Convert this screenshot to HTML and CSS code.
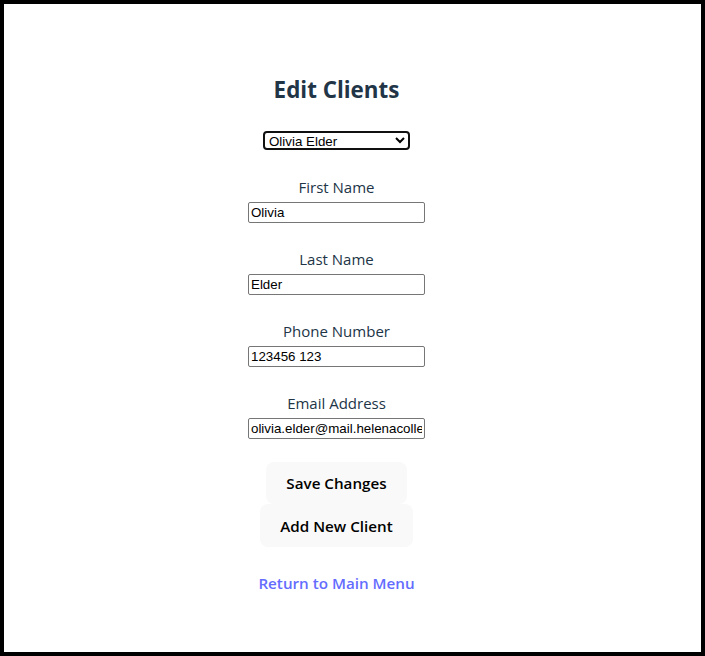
FILE: index.html
```html
<!DOCTYPE html>
<html lang="en">
<head>
<meta charset="utf-8">
<title>Edit Clients</title>
<link rel="stylesheet" href="styles.css">
</head>
<body>
<div class="frame">
  <div class="app">
    <h2 class="title">Edit Clients</h2>
    <select class="client-select">
      <option>Olivia Elder</option>
      <option>Add New Client</option>
    </select>
    <div class="field first">
      <label class="label" for="fn">First Name</label>
      <input class="input" id="fn" type="text" value="Olivia">
    </div>
    <div class="field">
      <label class="label" for="ln">Last Name</label>
      <input class="input" id="ln" type="text" value="Elder">
    </div>
    <div class="field">
      <label class="label" for="ph">Phone Number</label>
      <input class="input" id="ph" type="text" value="123456 123">
    </div>
    <div class="field">
      <label class="label" for="em">Email Address</label>
      <input class="input" id="em" type="text" value="olivia.elder@mail.helenacollege.edu">
    </div>
    <div class="actions">
      <button class="btn" type="button">Save Changes</button>
      <button class="btn" type="button">Add New Client</button>
    </div>
    <a class="link" href="#">Return to Main Menu</a>
  </div>
</div>
</body>
</html>
```

FILE: styles.css
```css
html, body {
  margin: 0;
  padding: 0;
  background: #ffffff;
}

.frame {
  box-sizing: border-box;
  width: 705px;
  height: 656px;
  border: 4px solid #000000;
  background: #ffffff;
}

.app {
  width: 665px;
  display: flex;
  flex-direction: column;
  align-items: center;
  font-family: "Open Sans", "Noto Sans", sans-serif;
  color: #213547;
  font-size: 15px;
  line-height: 24px;
}

.title {
  margin: 68px 0 0;
  font-size: 22.4px;
  line-height: 36px;
  font-weight: 700;
}

.client-select {
  box-sizing: border-box;
  margin-top: 23px;
  width: 147px;
  height: 19px;
  border: 2px solid #101010;
  border-radius: 4px;
  padding: 0;
  font-family: "Liberation Sans", Arial, sans-serif;
  font-size: 13.33px;
  color: #000000;
  background: #ffffff;
}

.field {
  display: flex;
  flex-direction: column;
  align-items: center;
  margin-top: 24px;
}

.field.first {
  margin-top: 25px;
}

.label {
  display: block;
  line-height: 24px;
  margin-bottom: 3px;
}

.input {
  box-sizing: border-box;
  width: 177px;
  height: 21px;
  border: 1px solid #767676;
  border-radius: 2px;
  padding: 1px 2px;
  font-family: "Liberation Sans", Arial, sans-serif;
  font-size: 13.33px;
  color: #000000;
  background: #ffffff;
}

.actions {
  margin-top: 23px;
  display: flex;
  flex-direction: column;
  align-items: center;
}

.btn {
  box-sizing: border-box;
  height: 42px;
  border-radius: 8px;
  border: 1px solid transparent;
  padding: 0 19.2px;
  font-size: 15.2px;
  line-height: 22px;
  font-weight: 600;
  font-family: inherit;
  color: #000000;
  background-color: #f9f9f9;
  cursor: pointer;
}

.btn + .btn {
  height: 43px;
}

.link {
  margin-top: 24px;
  line-height: 24px;
  font-size: 15.2px;
  font-weight: 600;
  color: #646cff;
  text-decoration: none;
}
```
